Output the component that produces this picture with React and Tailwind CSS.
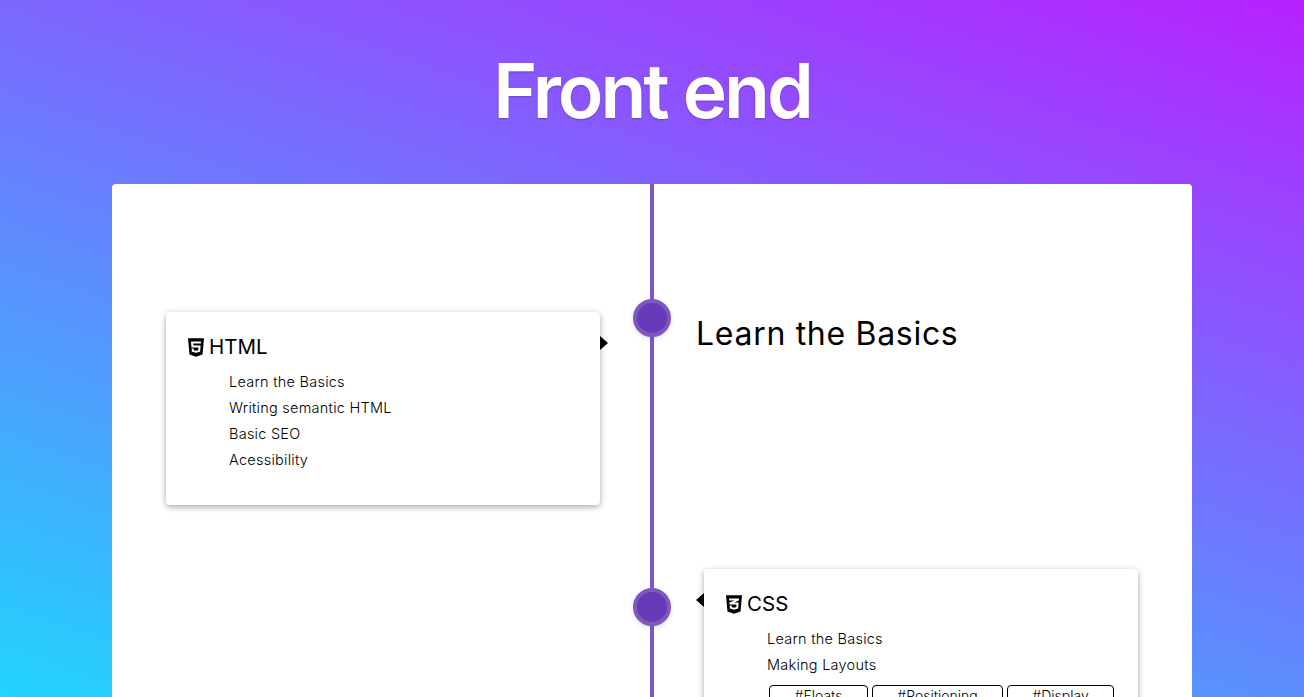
import { FaHtml5, FaCss3Alt } from "react-icons/fa";

const tags = [
  { label: "#Floats", width: "w-[99px]" },
  { label: "#Positioning", width: "w-[131px]" },
  { label: "#Display", width: "w-[107px]" },
];

function Topics({ items }) {
  return (
    <ul className="mt-[9px] pl-[41px]">
      {items.map((t) => (
        <li key={t} className="h-[26px] text-[14.5px] leading-[26px] font-light tracking-[0.25px] text-black">
          {t}
        </li>
      ))}
    </ul>
  );
}

function CardTitle({ icon: Icon, children }) {
  return (
    <h2 className="flex h-[26px] items-center gap-[5px] text-[20.5px] font-normal text-black">
      <Icon className="h-[21px] w-[16px]" preserveAspectRatio="none" />
      {children}
    </h2>
  );
}

function Dot({ className = "" }) {
  return (
    <div className={`h-[38px] w-[38px] rounded-full border-4 border-[#7e57c2] bg-[#673ab7] shadow-[0_2px_4px_rgba(0,0,0,0.12)] ${className}`} />
  );
}

export default function App() {
  return (
    <div
      className="h-screen overflow-hidden bg-[linear-gradient(19deg,#21d4fd_0%,#b721ff_100%)] px-[112px]"
      style={{ fontFamily: "Inter, 'Noto Sans', sans-serif" }}
    >
      <h1 className="flex h-[182px] items-center justify-center text-[75px] font-semibold tracking-[-3px] text-white [text-shadow:0_1px_2px_rgba(0,0,0,0.25)]">
        Front end
      </h1>

      <main className="mt-[2px] h-[900px] rounded-t bg-white bg-[linear-gradient(#7e57c2,#7e57c2)] bg-[length:4px_100%] bg-center bg-no-repeat px-[54px] pt-[115px]">
        <section className="grid h-[270px] grid-cols-[434px_38px_434px] items-start gap-x-[33px]">
          <article className="relative mt-[13px] h-[193px] rounded-sm bg-white p-[22px] shadow-[0_2px_6px_rgba(0,0,0,0.35)]">
            <span className="absolute top-[24px] -right-[8px] h-0 w-0 border-y-[7px] border-l-[8px] border-y-transparent border-l-black" />
            <CardTitle icon={FaHtml5}>HTML</CardTitle>
            <Topics items={["Learn the Basics", "Writing semantic HTML", "Basic SEO", "Acessibility"]} />
          </article>
          <Dot />
          <h3 className="mt-[15px] -ml-[8px] text-[32px] leading-10 font-normal tracking-[0.7px] text-black">
            Learn the Basics
          </h3>
        </section>

        <section className="grid grid-cols-[434px_38px_434px] items-start gap-x-[33px]">
          <div />
          <Dot className="mt-[19px]" />
          <article className="relative rounded-sm bg-white p-[22px] shadow-[0_2px_6px_rgba(0,0,0,0.35)]">
            <span className="absolute top-[24px] -left-[8px] h-0 w-0 border-y-[7px] border-r-[8px] border-y-transparent border-r-black" />
            <CardTitle icon={FaCss3Alt}>CSS</CardTitle>
            <Topics items={["Learn the Basics", "Making Layouts"]} />
            <div className="mt-[7px] ml-[43px] flex gap-1">
              {tags.map((t) => (
                <span
                  key={t.label}
                  className={`h-[30px] rounded-sm border border-black text-center text-[14px] leading-[20px] font-light text-black ${t.width}`}
                >
                  {t.label}
                </span>
              ))}
            </div>
          </article>
        </section>
      </main>
    </div>
  );
}
